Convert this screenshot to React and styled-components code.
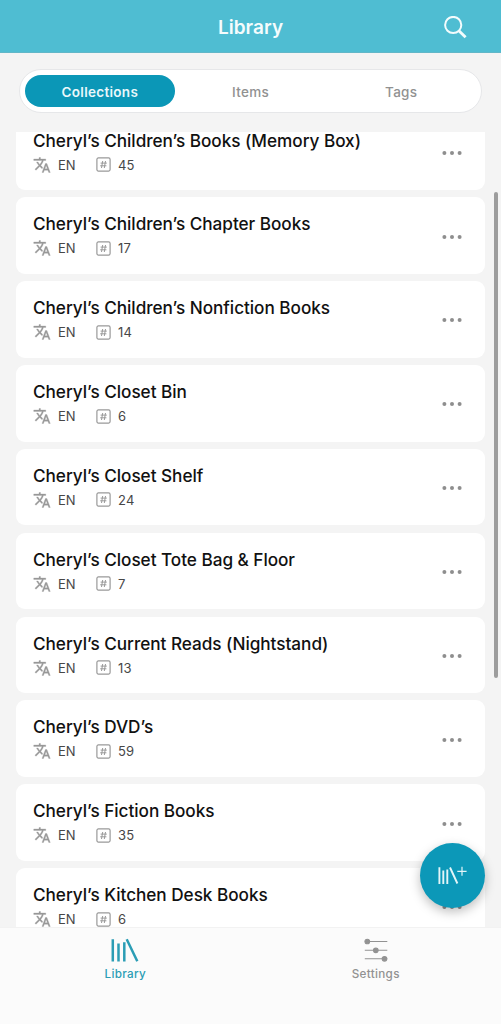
import React from 'react';
import styled, { createGlobalStyle } from 'styled-components';
import { MdTranslate } from 'react-icons/md';


const GlobalStyle = createGlobalStyle`
    * {
        box-sizing: border-box;
    }
    body {
        margin: 0;
        overflow: hidden;
        font-family: Inter, 'Liberation Sans', sans-serif;
        background: #f4f4f4;
    }
    button {
        border: none;
        padding: 0;
        background: none;
        font-family: inherit;
    }
`

const Screen = styled.div`
    position: relative;
    display: flex;
    flex-direction: column;
    width: 501px;
    height: 1024px;
    overflow: hidden;
    background: #f4f4f4;
`

const Header = styled.header`
    display: grid;
    grid-template-columns: 1fr auto 1fr;
    align-items: center;
    flex: none;
    height: 53px;
    padding: 3px 34px 0;
    background: #4fbdd2;
    border-bottom: 1px solid #62b7c8;
`

const Title = styled.h1`
    grid-column: 2;
    margin: 0;
    font-size: 19px;
    line-height: 24px;
    font-weight: 600;
    letter-spacing: 0.05px;
    color: #f5fcfd;
`

const SearchButton = styled.button`
    justify-self: end;
    display: flex;
    height: 24px;
`

const Segments = styled.nav`
    display: flex;
    flex: none;
    height: 44px;
    margin: 16px 19px 0;
    padding: 5px 4.5px;
    border: 1px solid #e6e7e9;
    border-radius: 22px;
    background: #fff;
`

const Segment = styled.button`
    flex: 1;
    padding-top: 1px;
    border-radius: 17px;
    font-size: 13.5px;
    font-weight: ${props => props.$active ? 600 : 500};
    letter-spacing: 0.3px;
    color: ${props => props.$active ? '#e9f8fb' : '#919191'};
    background: ${props => props.$active ? '#0b97b7' : 'transparent'};
`

const ListArea = styled.main`
    display: flex;
    flex: 1;
    min-height: 0;
    flex-direction: column;
    justify-content: flex-end;
    margin-top: 19px;
    padding: 0 16px;
    overflow: hidden;
`

const List = styled.div`
    display: flex;
    flex-direction: column;
    gap: 7.35px;
    margin-bottom: -17.6px;
`

const Card = styled.article`
    display: flex;
    flex: none;
    justify-content: space-between;
    align-items: center;
    height: 76.5px;
    padding: 0 22px 0 17px;
    border-radius: 9px;
    background: #fff;
`

const CardTitle = styled.h2`
    margin: -0.5px 0 0;
    font-size: 17.2px;
    line-height: 22px;
    font-weight: 500;
    letter-spacing: -0.04px;
    white-space: nowrap;
    color: #111;
`

const Meta = styled.div`
    display: flex;
    align-items: center;
    height: 18px;
    margin-top: 4px;
    font-size: 13px;
    color: #474747;
`

const Language = styled.span`
    display: flex;
    align-items: center;
    gap: 7px;
    width: 63px;

    svg {
        color: #999;
    }
    svg path:last-child {
        stroke: #999;
        stroke-width: 0.4px;
    }
`

const Count = styled.span`
    display: flex;
    align-items: center;
    gap: 7px;
    letter-spacing: 0.2px;
`

const MoreButton = styled.button`
    display: flex;
    margin-top: 2px;
`

const Scrollbar = styled.div`
    position: absolute;
    top: 192px;
    right: 3.5px;
    width: 3.5px;
    height: 486px;
    border-radius: 2px;
    background: #9d9d9d;
`

const AddButton = styled.button`
    position: absolute;
    right: 16.5px;
    bottom: 116px;
    display: flex;
    align-items: center;
    justify-content: center;
    width: 65px;
    height: 65px;
    border-radius: 50%;
    background: #0c98b8;
    box-shadow: 0 4px 11px rgba(0, 0, 0, 0.26);
`

const TabBar = styled.footer`
    display: flex;
    flex: none;
    height: 97px;
    border-top: 1px solid #f2f2f2;
    background: #fbfbfb;
`

const Tab = styled.button`
    display: flex;
    flex: 1;
    flex-direction: column;
    align-items: center;
    padding-top: 9px;
    font-size: 11.7px;
    line-height: 16px;
    font-weight: 500;
    letter-spacing: 0.3px;
    color: ${props => props.$active ? '#2b9db5' : '#929292'};

    svg {
        margin-bottom: 2px;
    }
`

const collections = [
    { name: 'Cheryl’s Children’s Books (Memory Box)', count: 45 },
    { name: 'Cheryl’s Children’s Chapter Books', count: 17 },
    { name: 'Cheryl’s Children’s Nonfiction Books', count: 14 },
    { name: 'Cheryl’s Closet Bin', count: 6 },
    { name: 'Cheryl’s Closet Shelf', count: 24 },
    { name: 'Cheryl’s Closet Tote Bag & Floor', count: 7 },
    { name: 'Cheryl’s Current Reads (Nightstand)', count: 13 },
    { name: 'Cheryl’s DVD’s', count: 59 },
    { name: 'Cheryl’s Fiction Books', count: 35 },
    { name: 'Cheryl’s Kitchen Desk Books', count: 6 },
]

const SearchIcon = () => (
    <svg width="24" height="24" viewBox="0 0 24 24" fill="none" stroke="#f3fcfd">
        <circle cx="10.2" cy="9" r="8.1" strokeWidth="2" />
        <path d="M15.6 14.5L22.6 21.2" strokeWidth="2.9" />
    </svg>
)

const HashIcon = () => (
    <svg width="15" height="15" viewBox="0 0 15 15" fill="none" stroke="#999">
        <rect x="0.9" y="0.9" width="13.2" height="13.2" rx="1.5" strokeWidth="1.2" />
        <path d="M6.7 4L5.5 11M9.5 4L8.3 11M4.6 6.1H10.8M4.2 8.8H10.4" strokeWidth="1" />
    </svg>
)

const DotsIcon = () => (
    <svg width="22" height="6" viewBox="0 0 22 6" fill="#8e8e8e">
        <circle cx="3.4" cy="3" r="2" />
        <circle cx="11" cy="3" r="2" />
        <circle cx="18.6" cy="3" r="2" />
    </svg>
)

const BooksIcon = () => (
    <svg width="28" height="27" viewBox="0 0 28 27" fill="none" stroke="currentColor" strokeWidth="2.5">
        <path d="M1.8 2.3V24.5M7.5 6.6V24.5M13.3 5.3V24.5M15.7 2.3L26.3 24.2" />
    </svg>
)

const AddBooksIcon = () => (
    <svg width="29" height="20" viewBox="0 0 29 20" fill="none" stroke="#e3f5f8">
        <path d="M1.4 1.3V18.1M5.3 4.5V18.1M9.3 3.5V18.1M12 1.5L19.4 17.5" strokeWidth="1.9" />
        <path d="M24 0.8V9.8M19.3 5.3H28.6" strokeWidth="1.2" />
    </svg>
)

const SlidersIcon = () => (
    <svg width="24" height="27" viewBox="0 0 24 27" fill="#929292" stroke="#929292" strokeWidth="1.1">
        <path d="M0.8 4.5H23.3M0.8 13.3H23.3M0.8 21.8H23.3" />
        <circle cx="3.3" cy="4.5" r="2.3" />
        <circle cx="11.8" cy="13.3" r="2.3" />
        <circle cx="20.5" cy="21.8" r="2.3" />
    </svg>
)

const CollectionCard = ({ name, count }) => (
    <Card>
        <div>
            <CardTitle>{name}</CardTitle>
            <Meta>
                <Language><MdTranslate size={18} />EN</Language>
                <Count><HashIcon />{count}</Count>
            </Meta>
        </div>
        <MoreButton aria-label="More"><DotsIcon /></MoreButton>
    </Card>
)

const App = () => {
    return (
        <Screen>
            <GlobalStyle />
            <Header>
                <Title>Library</Title>
                <SearchButton aria-label="Search"><SearchIcon /></SearchButton>
            </Header>
            <Segments>
                <Segment $active>Collections</Segment>
                <Segment>Items</Segment>
                <Segment>Tags</Segment>
            </Segments>
            <ListArea>
                <List>
                    {collections.map(item => (
                        <CollectionCard key={item.name} {...item} />
                    ))}
                </List>
            </ListArea>
            <TabBar>
                <Tab $active><BooksIcon />Library</Tab>
                <Tab><SlidersIcon />Settings</Tab>
            </TabBar>
            <Scrollbar />
            <AddButton aria-label="Add collection"><AddBooksIcon /></AddButton>
        </Screen>
    )
}

export default App;
